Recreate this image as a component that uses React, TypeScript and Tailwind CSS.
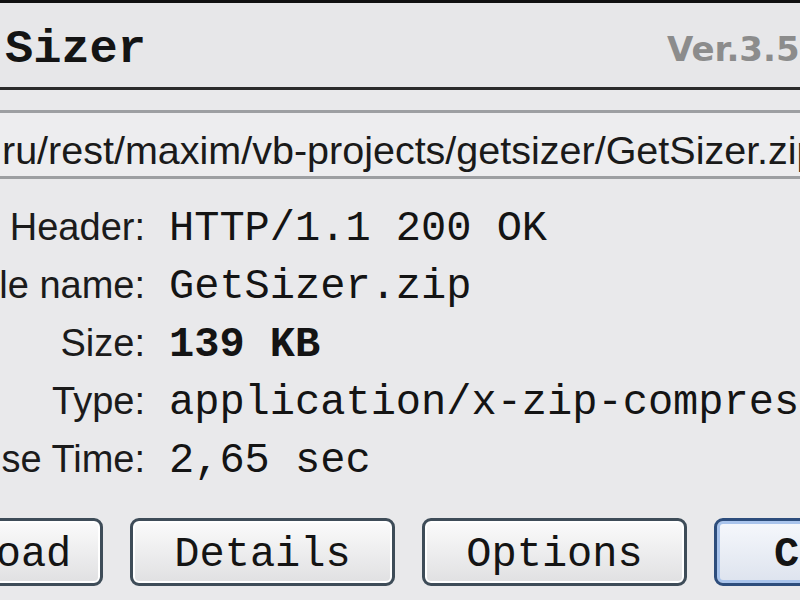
type InfoRow = {
    label: string;
    value: string;
    bold?: boolean;
};

const rows: InfoRow[] = [
    {label: "Header:", value: "HTTP/1.1 200 OK"},
    {label: "File name:", value: "GetSizer.zip"},
    {label: "Size:", value: "139 KB", bold: true},
    {label: "Type:", value: "application/x-zip-compressed"},
    {label: "Response Time:", value: "2,65 sec"},
];

const buttons = ["Download", "Details", "Options"];

export default function App() {
    return (
        <div className="w-[800px] h-[600px] overflow-hidden bg-[#e9e9eb] text-[#141414] border-t-[3px] border-[#111]">
            {/* title bar */}
            <div className="h-[87px] pt-[8px] grid grid-cols-[1fr_133px] items-center overflow-hidden bg-[#e7e7e9] border-b-[3px] border-[#2b2b2b]">
                <div className="pl-[5px] font-['Liberation_Mono',monospace] font-bold text-[47px] leading-none">
                    Sizer
                </div>
                <div className="whitespace-nowrap font-['DejaVu_Sans',sans-serif] font-bold text-[34px] leading-none text-[#8c8c8c]">
                    Ver.3.5
                </div>
            </div>

            {/* url field */}
            <div className="mt-[20px] h-[69px] pt-[12px] flex items-center overflow-hidden bg-[#ededef] border-y-[3px] border-[#9d9fa2]">
                <span className="pl-[2px] whitespace-nowrap font-['Liberation_Sans',Arial,sans-serif] text-[39.5px] leading-none text-[#1a1a1a]">
                    ru/rest/maxim/vb-projects/getsizer/GetSizer.zip
                </span>
            </div>

            {/* info rows */}
            <div className="mt-[19px] flex flex-col">
                {rows.map((r) => (
                    <div key={r.label} className="h-[58px] flex items-baseline leading-[58px] overflow-hidden">
                        <div className="w-[145px] shrink-0 flex justify-end overflow-hidden">
                            <span className="shrink-0 whitespace-nowrap font-['Liberation_Sans',Arial,sans-serif] text-[38px] text-[#1b1b1b]">
                                {r.label}
                            </span>
                        </div>
                        <span
                            className={`ml-[24px] whitespace-nowrap font-['Liberation_Mono',monospace] text-[42px] ${
                                r.bold ? "font-bold" : ""
                            }`}
                        >
                            {r.value}
                        </span>
                    </div>
                ))}
            </div>

            {/* buttons */}
            <div className="mt-[30px] -ml-[162px] flex gap-[27px]">
                {buttons.map((b) => (
                    <div
                        key={b}
                        className="w-[265px] h-[68px] shrink-0 pt-[6px] flex items-center justify-center rounded-[9px] border-[3px] border-[#3e4c58] bg-linear-to-b from-[#fbfbfb] to-[#e0e0e2] shadow-[inset_0_0_0_2px_#ffffff] font-['Liberation_Mono',monospace] text-[42px] leading-none"
                    >
                        {b}
                    </div>
                ))}
                <div className="w-[265px] h-[68px] shrink-0 pt-[6px] pl-[57px] flex items-center rounded-[9px] border-[3px] border-[#2d4d7c] bg-linear-to-b from-[#f6f8fc] to-[#dde3ee] shadow-[inset_0_0_0_3px_#a9c4ec] font-['Liberation_Mono',monospace] font-bold text-[42px] leading-none">
                    Close
                </div>
            </div>
        </div>
    );
}
